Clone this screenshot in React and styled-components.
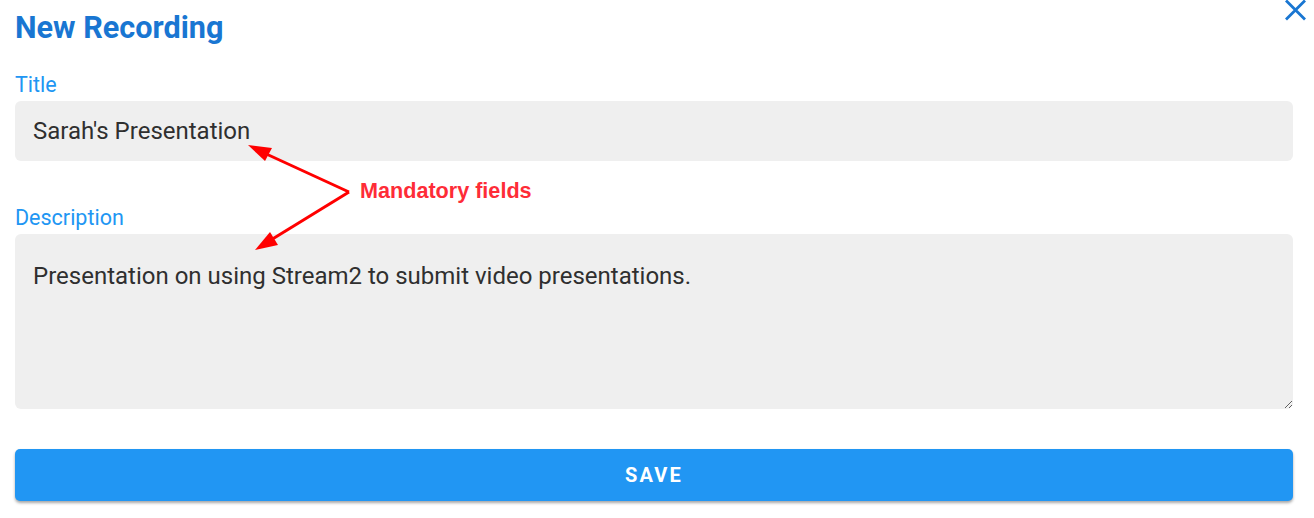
import styled, { createGlobalStyle } from "styled-components"

const Global = createGlobalStyle`
    html, body {
        margin: 0;
        padding: 0;
        background: #ffffff;
        font-family: Roboto, "Noto Sans", sans-serif;
    }
`

const Dialog = styled.div`
    position: relative;
    width: 1314px;
    height: 518px;
    box-sizing: border-box;
    padding: 11px 21px 0 15px;
    overflow: hidden;
`

const Heading = styled.h2`
    margin: 0;
    font-size: 30.6px;
    line-height: 34px;
    font-weight: 700;
    color: #1976d2;
`

const Close = styled.button`
    position: absolute;
    top: 0;
    right: 6px;
    width: 24px;
    height: 21px;
    padding: 0;
    border: 0;
    background: none;
    cursor: pointer;
`

const Field = styled.div`
    display: flex;
    flex-direction: column;
    gap: 4px;
    margin-top: ${p => p.$top}px;
`

const Label = styled.label`
    font-size: 21.5px;
    line-height: 24px;
    color: #2196f3;
`

const Input = styled.input`
    box-sizing: border-box;
    width: 100%;
    height: 60px;
    padding: 0 18px;
    border: 0;
    border-radius: 6px;
    background: #efefef;
    font-family: Roboto, sans-serif;
    font-size: 24px;
    color: #2f2f2f;
    outline: none;
`

const TextArea = styled.textarea`
    display: block;
    box-sizing: border-box;
    width: 100%;
    height: 175px;
    padding: 28px 18px;
    border: 0;
    border-radius: 6px;
    background: #efefef;
    font-family: Roboto, sans-serif;
    font-size: 24px;
    line-height: 28px;
    color: #2f2f2f;
    outline: none;
`

const SaveButton = styled.button`
    display: block;
    width: 100%;
    height: 52px;
    margin-top: 40px;
    border: 0;
    border-radius: 5px;
    background: #2196f3;
    box-shadow: 0 2px 3px rgba(0, 0, 0, 0.35);
    color: #fff;
    font-family: Roboto, sans-serif;
    font-size: 20px;
    font-weight: 700;
    letter-spacing: 2.2px;
    cursor: pointer;
`

const Note = styled.div`
    position: absolute;
    left: 0;
    top: 0;
    pointer-events: none;
`

const NoteText = styled.span`
    position: absolute;
    left: 360px;
    top: 178px;
    white-space: nowrap;
    font-family: "Liberation Sans", Arial, sans-serif;
    font-size: 21.6px;
    font-weight: 700;
    color: #fe2c37;
`

function Arrows() {
    return (
        <svg width="1314" height="518" style={{position: "absolute", left: 0, top: 0}}>
            <g stroke="#ff0000" strokeWidth="3" fill="none">
                <line x1="349" y1="192" x2="262" y2="152" />
                <line x1="349" y1="192" x2="266" y2="243" />
            </g>
            <g fill="#ff0000">
                <polygon points="248,145 272,148 265,161" />
                <polygon points="255,250 270,232 278,245" />
            </g>
        </svg>
    )
}

export default function App() {
    return (
        <>
            <Global />
            <Dialog>
                <Heading>New Recording</Heading>
                <Close aria-label="close">
                    <svg width="24" height="21" viewBox="0 0 24 21">
                        <path d="M2 0.5 L21 19.5 M21 0.5 L2 19.5" stroke="#1976d2" strokeWidth="2.8" fill="none" />
                    </svg>
                </Close>

                <Field $top={28}>
                    <Label>Title</Label>
                    <Input defaultValue="Sarah's Presentation" />
                </Field>

                <Field $top={45}>
                    <Label>Description</Label>
                    <TextArea defaultValue="Presentation on using Stream2 to submit video presentations." />
                </Field>

                <SaveButton>SAVE</SaveButton>

                <Note>
                    <Arrows />
                    <NoteText>Mandatory fields</NoteText>
                </Note>
            </Dialog>
        </>
    )
}
